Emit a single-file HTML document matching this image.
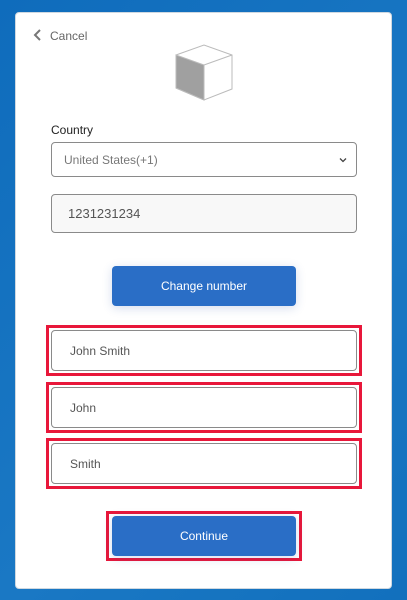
<!DOCTYPE html><html><head><style>
*{box-sizing:border-box;margin:0;padding:0}
body{width:407px;height:600px;background:linear-gradient(135deg,#0f6cbc,#1a78c4 60%,#1270bd);font-family:"Liberation Sans",sans-serif;position:relative;overflow:hidden}
.card{position:absolute;left:15px;top:12px;width:377px;height:577px;background:#fff;border-radius:4px;border:1px solid #cfd8e0}
.a{position:absolute}
.in{position:absolute;left:51px;width:306px;border:1px solid #8a8a8a;border-radius:4px;background:#fff;font-size:12px;color:#555;padding-left:18px;display:flex;align-items:center}
.red{position:absolute;border:3px solid #e8173a}
.btn{position:absolute;left:112px;width:184px;height:40px;background:#2a6ec6;border-radius:4px;color:#fff;font-size:12px;display:flex;align-items:center;justify-content:center;box-shadow:0 2px 10px rgba(40,80,160,.2)}
</style></head><body>
<div class="card"></div>
<svg class="a" style="left:33px;top:29px" width="10" height="12" viewBox="0 0 10 12"><path d="M7 1L2 6l5 5" stroke="#777" stroke-width="2" fill="none"/></svg>
<div class="a" style="left:50px;top:29px;font-size:12px;color:#666">Cancel</div>
<svg class="a" style="left:174px;top:44px" width="60" height="58" viewBox="0 0 60 58"><path d="M2 11L30 1l28 10v34L30 56 2 44z" fill="#fff" stroke="#bbb"/><path d="M2 11l28 10v35L2 44z" fill="#a0a0a0" stroke="#bbb"/><path d="M30 21L58 11" stroke="#bbb" fill="none"/></svg>
<div class="a" style="left:51px;top:123px;font-size:12px;color:#222">Country</div>
<div class="in" style="top:142px;height:35px;padding-left:12px;color:#777">United States(+1)<svg style="position:absolute;right:9px;top:14px" width="8" height="6" viewBox="0 0 8 6"><path d="M1 1.5l3 3 3-3" stroke="#444" stroke-width="1.3" fill="none"/></svg></div>
<div class="in" style="top:194px;height:39px;background:#f8f8f8;padding-left:16px;font-size:13px">1231231234</div>
<div class="btn" style="top:266px">Change number</div>
<div class="red" style="left:46px;top:325px;width:316px;height:51px"></div>
<div class="in" style="top:330px;height:41px">John Smith</div>
<div class="red" style="left:46px;top:382px;width:316px;height:51px"></div>
<div class="in" style="top:387px;height:41px">John</div>
<div class="red" style="left:46px;top:438px;width:316px;height:51px"></div>
<div class="in" style="top:443px;height:41px">Smith</div>
<div class="red" style="left:106px;top:511px;width:196px;height:50px"></div>
<div class="btn" style="top:516px">Continue</div>
</body></html>
